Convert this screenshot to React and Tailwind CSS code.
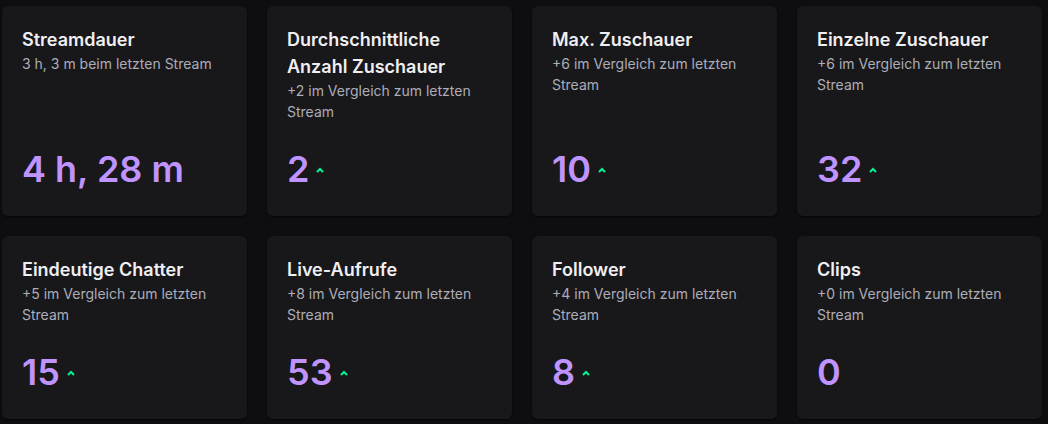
import React from 'react';

const stats = [
  { title: 'Streamdauer', sub: '3 h, 3 m beim letzten Stream', value: '4 h, 28 m', up: false },
  { title: 'Durchschnittliche Anzahl Zuschauer', sub: '+2 im Vergleich zum letzten Stream', value: '2', up: true },
  { title: 'Max. Zuschauer', sub: '+6 im Vergleich zum letzten Stream', value: '10', up: true },
  { title: 'Einzelne Zuschauer', sub: '+6 im Vergleich zum letzten Stream', value: '32', up: true },
  { title: 'Eindeutige Chatter', sub: '+5 im Vergleich zum letzten Stream', value: '15', up: true },
  { title: 'Live-Aufrufe', sub: '+8 im Vergleich zum letzten Stream', value: '53', up: true },
  { title: 'Follower', sub: '+4 im Vergleich zum letzten Stream', value: '8', up: true },
  { title: 'Clips', sub: '+0 im Vergleich zum letzten Stream', value: '0', up: false },
];

function Caret() {
  return (
    <svg width="8" height="6" viewBox="0 0 8 6" className="ml-[7px] mt-[2px] text-[#00f593]">
      <polyline points="1,5 4,2 7,5" fill="none" stroke="currentColor" strokeWidth="2" />
    </svg>
  );
}

function StatCard({ stat }) {
  return (
    <div className="flex flex-col rounded-md bg-[#18181b] p-5 shadow-[0_1px_2px_rgba(0,0,0,0.6)]">
      <h3 className="text-[18px] font-semibold leading-[27px] text-[#efeff1]">{stat.title}</h3>
      <p className="text-[14px] leading-[21px] text-[#adadb8]">{stat.sub}</p>
      <div className="mt-auto flex items-center pt-5">
        <span className="text-[36px] font-semibold leading-[54px] text-[#bf94ff]">{stat.value}</span>
        {stat.up && <Caret />}
      </div>
    </div>
  );
}

export default function App() {
  return (
    <div
      className="min-h-[424px] w-[1048px] bg-[#0e0e10] pl-[2px] pr-[6px] pt-[6px]"
      style={{ fontFamily: 'Inter, "Noto Sans", sans-serif' }}
    >
      <div className="grid grid-cols-4 gap-x-5 gap-y-5">
        {stats.map((s, i) => (
          <StatCard key={i} stat={s} />
        ))}
      </div>
    </div>
  );
}
